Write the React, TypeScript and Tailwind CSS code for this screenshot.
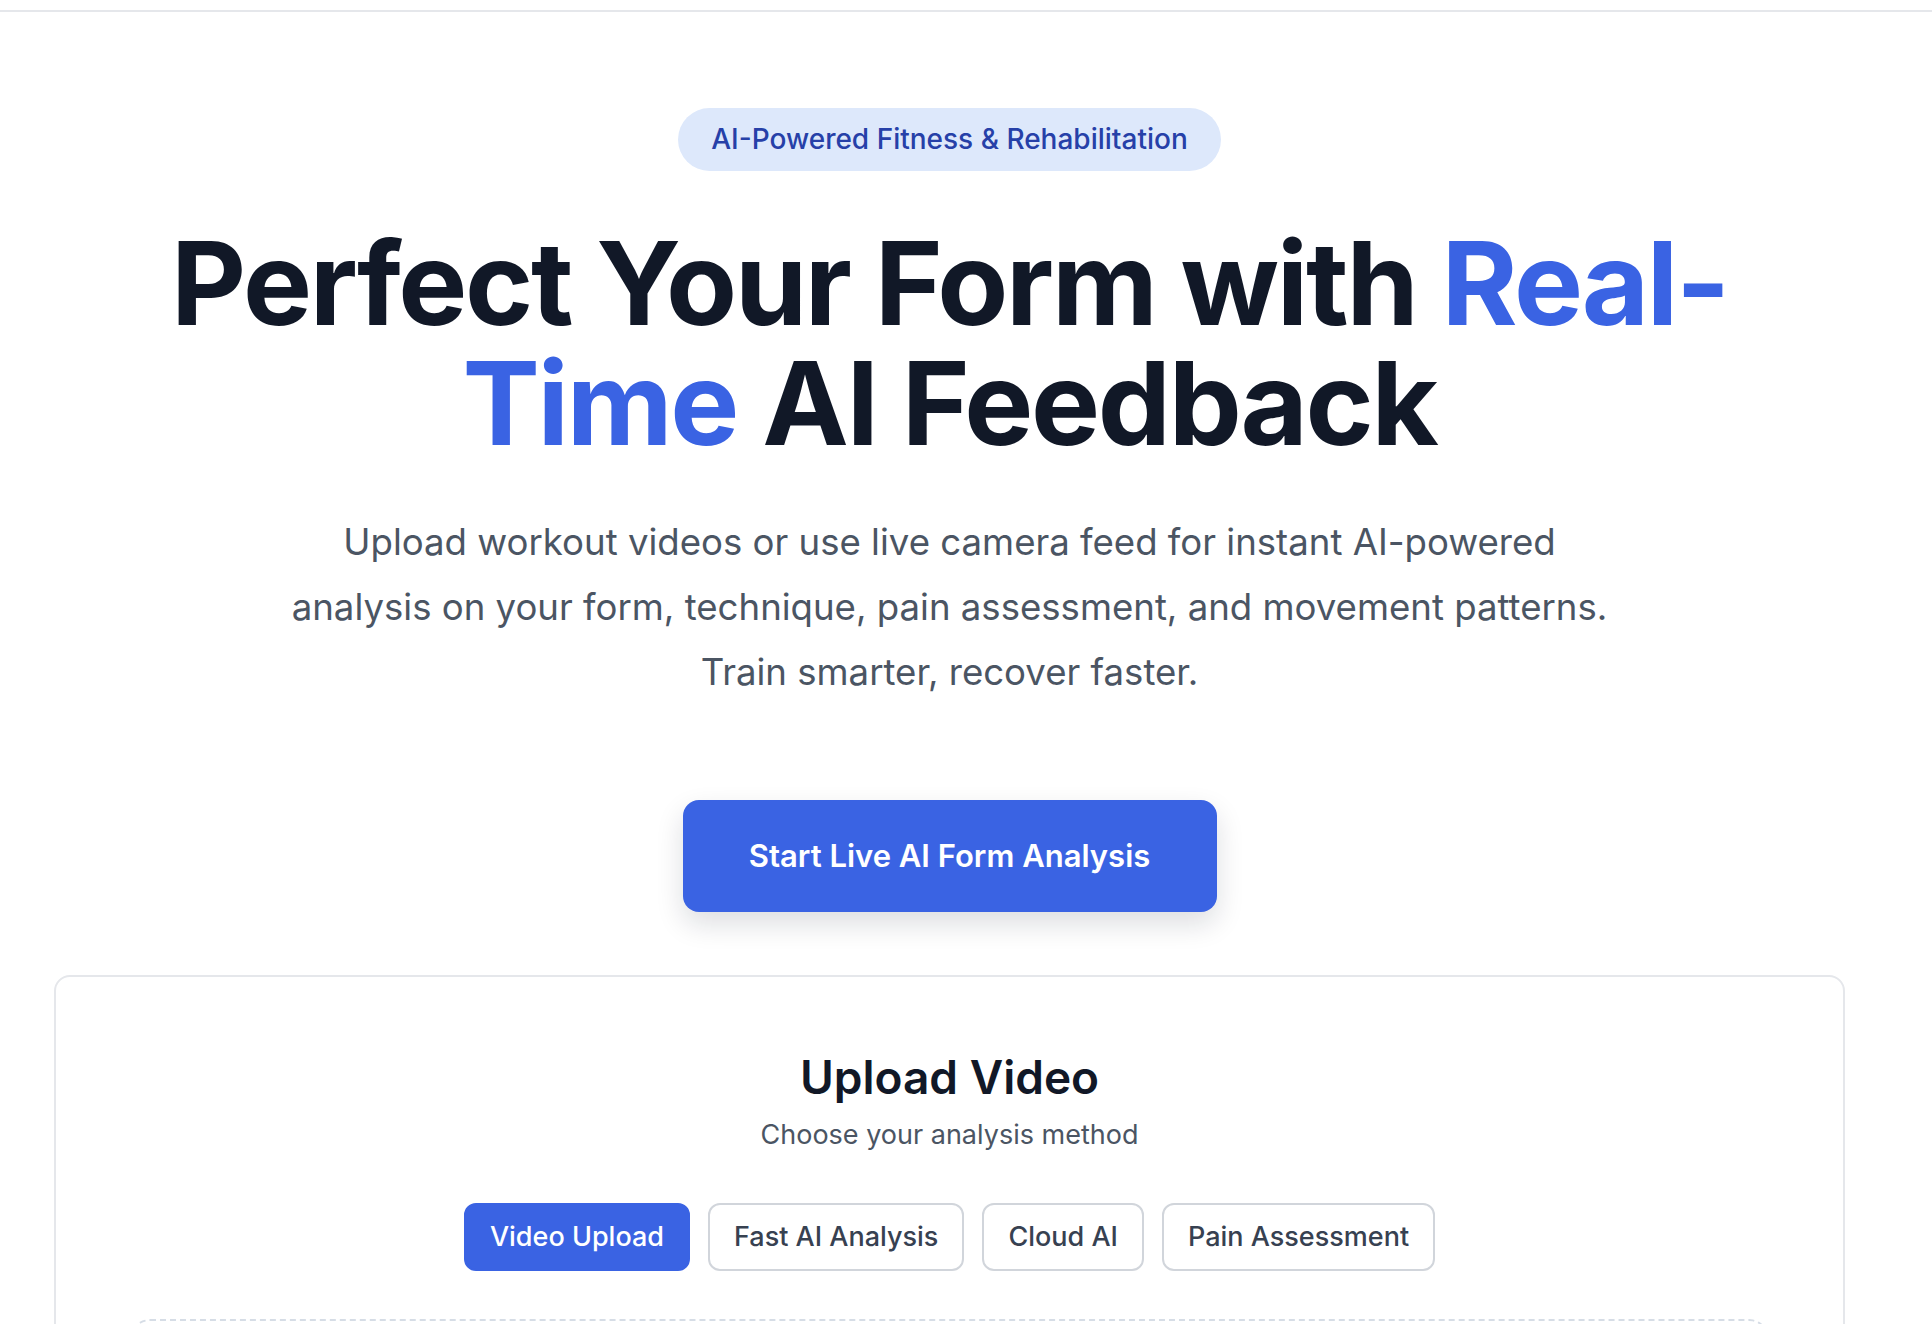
import React from "react";

const tabs = ["Video Upload", "Fast AI Analysis", "Cloud AI", "Pain Assessment"];

const App = () => {
  return (
    <div className="h-[1324px] overflow-hidden bg-white font-['Inter','Noto_Sans',sans-serif]">
      <div className="h-[12px] border-b-2 border-[#e5e7eb]"></div>

      <main className="w-[1899px] flex flex-col items-center pt-[96px]">
        <span className="rounded-full bg-[#dde8fb] px-[33px] py-[12px] text-[28px] leading-[39px] font-medium text-[#2640a8]">
          AI-Powered Fitness &amp; Rehabilitation
        </span>

        <h1 className="mt-[52px] text-center text-[116px] leading-[120px] font-bold tracking-[-0.02em] text-[#111827]">
          Perfect Your Form with <span className="text-[#3a63e3]">Real-</span>
          <br />
          <span className="text-[#3a63e3]">Time</span> AI Feedback
        </h1>

        <p className="mt-[47px] max-w-[1334px] text-center text-[36.6px] leading-[65px] text-[#4b5563]">
          Upload workout videos or use live camera feed for instant AI-powered analysis on your form,
          technique, pain assessment, and movement patterns. Train smarter, recover faster.
        </p>

        <button className="mt-[95px] flex h-[112px] w-[534px] items-center justify-center rounded-[16px] bg-[#3a63e3] text-[31px] font-semibold text-white shadow-[0_12px_28px_rgba(15,23,42,0.14)]">
          Start Live AI Form Analysis
        </button>

        <section className="mt-[63px] w-[1791px] rounded-[16px] border-2 border-[#e5e7eb] px-[74px] pt-[72px]">
          <h2 className="text-center text-[46px] leading-[56px] font-semibold text-[#111827]">Upload Video</h2>
          <p className="mt-[10px] text-center text-[27px] leading-[40px] text-[#4b5563]">
            Choose your analysis method
          </p>

          <div className="mt-[48px] flex justify-center gap-[18px]">
            {tabs.map((t, i) => (
              <button
                key={t}
                className={
                  i === 0
                    ? "rounded-[12px] border-2 border-[#3a63e3] bg-[#3a63e3] px-[24px] py-[12px] text-[27px] leading-[40px] font-medium text-white"
                    : "rounded-[12px] border-2 border-[#d1d5db] bg-white px-[24px] py-[12px] text-[27px] leading-[40px] font-medium text-[#374151]"
                }
              >
                {t}
              </button>
            ))}
          </div>

          <div className="mt-[48px] h-[400px] rounded-[20px] border-2 border-dashed border-[#d6dde6]"></div>
        </section>
      </main>
    </div>
  );
};

export default App;
